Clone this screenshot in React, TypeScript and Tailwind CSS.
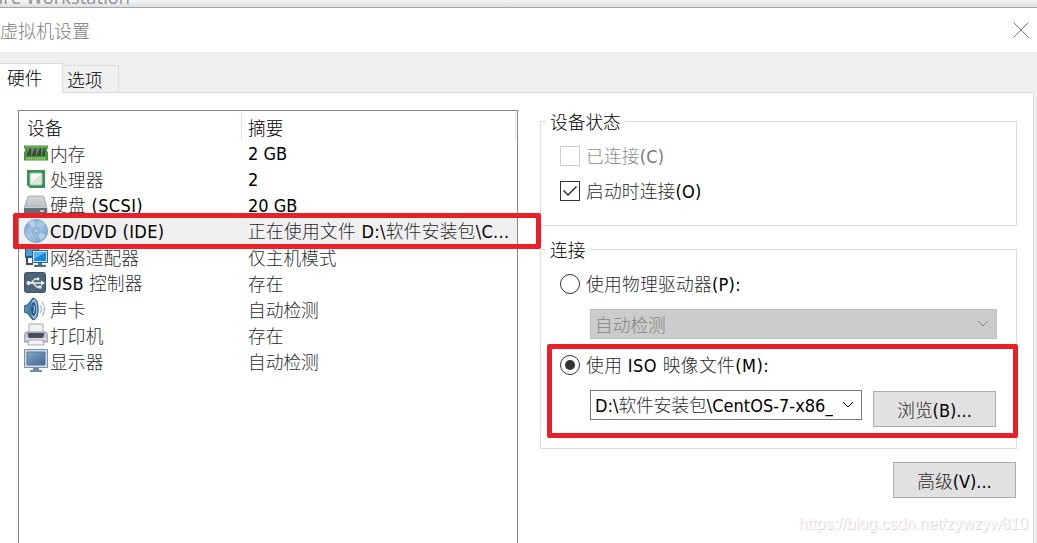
import type { ReactNode } from 'react';
import clsx from 'clsx';

// Latin runs use a wider, darker face than the Chinese ones
function Label({ text, className }: { text: string; className?: string }) {
  const parts = text.split(/([\x20-\x7e]+)/).filter(Boolean);

  return (
    <span className={clsx('whitespace-pre', className)}>
      {parts.map((part, i) =>
        /[\x20-\x7e]/.test(part) ? (
          <span
            key={i}
            className="font-['DejaVu_Sans_Condensed','DejaVu_Sans',sans-serif] text-[18px] font-normal [font-stretch:condensed]"
          >
            {part}
          </span>
        ) : (
          <span key={i} className="opacity-85">
            {part}
          </span>
        )
      )}
    </span>
  );
}

function MemoryIcon() {
  return (
    <svg viewBox="0 0 24 24" className="size-6">
      <path d="M0 4.500h24v3h-1v3h1v9H0v-9h1v-3H0z" fill="#45963b" />
      <path d="M1 5.500h22v1H1z" fill="#86bd6d" />
      <path d="M3 7h4v8H3zM8 7h4v8H8zM13 7h4v8h-4zM18 7h3v8h-3z" fill="#3a4b3a" />
      <path d="M3 7h3L3 13zM8 7h3l-3 6zM13 7h3l-3 6zM18 7h2l-2 6z" fill="#74816f" />
      <path d="M2 17.500h20" stroke="#b5cf77" strokeWidth="2" strokeDasharray="1.500 .7" />
    </svg>
  );
}

function CpuIcon() {
  return (
    <svg viewBox="0 0 24 24" className="size-6">
      <path d="M3 3h18v18H6l-3-3z" fill="#238442" />
      <path d="M4 4h16v16H6.500L4 17.500z" fill="none" stroke="#46a35f" />
      <rect x="6" y="6" width="12" height="12" rx="1" fill="#dfe3df" stroke="#b7d3b8" />
      <path d="M7 7h10L7 16z" fill="#f8f9f7" />
    </svg>
  );
}

function DiskIcon() {
  return (
    <svg viewBox="0 0 24 24" className="size-6">
      <defs>
        <linearGradient id="disk" x2="0" y2="1">
          <stop stopColor="#d7d9dc" />
          <stop offset="1" stopColor="#a6aab0" />
        </linearGradient>
      </defs>
      <path d="M4 4q1-1 3-1h10q2 0 3 1l3 11v6H0v-6z" fill="url(#disk)" stroke="#898f98" strokeWidth=".7" />
      <path d="M0 14h23v7H0z" fill="#646b75" />
      <path d="M0 14.500h23" stroke="#c5c8cc" />
      <path d="M16 17h4v2h-4z" fill="#a8c8e0" />
    </svg>
  );
}

function DiscIcon() {
  return (
    <svg viewBox="0 0 24 24" className="size-6">
      <defs>
        <linearGradient id="disc" x2="1" y2="1">
          <stop stopColor="#6e9fcf" />
          <stop offset=".45" stopColor="#a9c9e5" />
          <stop offset="1" stopColor="#6797c6" />
        </linearGradient>
      </defs>
      <circle cx="12" cy="12" r="11.500" fill="url(#disc)" stroke="#7098bf" strokeWidth=".8" />
      <path d="M12 12L4 4q3-3 6-3.500zM12 12l10 4q-2 4-5 6z" fill="#d9edfa" opacity=".5" />
      <circle cx="12" cy="12" r="4" fill="#9cc0df" stroke="#86acd0" />
      <circle cx="12" cy="12" r="1.500" fill="#eff7fc" stroke="#7ea6ca" />
    </svg>
  );
}

function NetworkIcon() {
  return (
    <svg viewBox="0 0 24 24" className="size-6">
      <path d="M1 2h14v11H1z" fill="#2c5b82" />
      <path d="M2 4h12v7H2z" fill="#4c9bd1" />
      <path d="M3 13v6h6" fill="none" stroke="#314e66" strokeWidth="2" />
      <path d="M8.500 5.500h15v12h-15z" fill="#d1e0ec" stroke="#34668c" />
      <path d="M10 7h12v9H10z" fill="#198ae0" />
      <path d="M10 7h12l-12 7z" fill="#56b5f3" />
      <path d="M14 18h4v2h4v2H10v-2h4z" fill="#47708f" />
    </svg>
  );
}

function UsbIcon() {
  return (
    <svg viewBox="0 0 24 24" className="size-6">
      <rect x="0.500" y="1.500" width="21" height="20" rx="2" fill="#4c657a" stroke="#3c556b" />
      <g fill="none" stroke="#eef2f4" strokeWidth="1.300">
        <path d="M4 12h14M7 12l4-4h3M9 12l4 4h3" />
      </g>
      <circle cx="4.500" cy="12" r="2" fill="#eef2f4" />
      <circle cx="14" cy="8" r="1.400" fill="#eef2f4" />
      <path d="M14.500 14.500h3v3h-3zM17 9.500l4 2.500-4 2.500z" fill="#eef2f4" />
    </svg>
  );
}

function SoundIcon() {
  return (
    <svg viewBox="0 0 24 24" className="size-6">
      <path d="M0 9l3-1 6-7q5 1 5 11T9 23l-6-7-3-1z" fill="#538cb5" stroke="#345f82" />
      <ellipse cx="10" cy="12" rx="4" ry="10.500" fill="#95bcdc" stroke="#315d83" />
      <ellipse cx="9.500" cy="12" rx="2.500" ry="7" fill="#285b8b" />
      <path d="M9.500 8q2 4 0 8" stroke="#a5d6f5" fill="none" />
      <path d="M16 8q3 4 0 8M18 5q5 7 0 14" stroke="#9cb1c4" strokeWidth="1.200" fill="none" />
    </svg>
  );
}

function PrinterIcon() {
  return (
    <svg viewBox="0 0 24 24" className="size-6">
      <path d="M5 1h14v11H5z" fill="#eff1f5" stroke="#a4a8b2" />
      <path d="M2 9h20l2 3v7H0v-7z" fill="#c0c2ce" stroke="#858998" strokeWidth=".8" />
      <path d="M4 10h16v3q-1 2-3 2H7q-3 0-3-2z" fill="#4c4f5b" />
      <path d="M1 16h22" stroke="#e4e5ed" strokeWidth="1.500" />
      <path d="M5 17h14l1 5H4z" fill="#f2f3f6" stroke="#9699a5" strokeWidth=".8" />
    </svg>
  );
}

function DisplayIcon() {
  return (
    <svg viewBox="0 0 24 24" className="size-6">
      <defs>
        <linearGradient id="screen" x2="1" y2="1">
          <stop stopColor="#86a8c6" />
          <stop offset="1" stopColor="#3f6791" />
        </linearGradient>
      </defs>
      <path d="M.5.500h23v18H.5z" fill="#d2dce5" stroke="#7992a7" />
      <path d="M3 3h18v13H3z" fill="url(#screen)" stroke="#56799a" />
      <path d="M9 19h6v2h3v2H6v-2h3z" fill="#6e8baa" />
    </svg>
  );
}

const devices: { icon: ReactNode; name: string; summary: string; selected?: boolean }[] = [
  { icon: <MemoryIcon />, name: '内存', summary: '2 GB' },
  { icon: <CpuIcon />, name: '处理器', summary: '2' },
  { icon: <DiskIcon />, name: '硬盘 (SCSI)', summary: '20 GB' },
  { icon: <DiscIcon />, name: 'CD/DVD (IDE)', summary: '正在使用文件 D:\\软件安装包\\C...', selected: true },
  { icon: <NetworkIcon />, name: '网络适配器', summary: '仅主机模式' },
  { icon: <UsbIcon />, name: 'USB 控制器', summary: '存在' },
  { icon: <SoundIcon />, name: '声卡', summary: '自动检测' },
  { icon: <PrinterIcon />, name: '打印机', summary: '存在' },
  { icon: <DisplayIcon />, name: '显示器', summary: '自动检测' },
];

function DeviceList() {
  return (
    <div className="mt-[17px] ml-[18px] h-[440px] w-[500px] border border-[#828790] bg-white">
      <div className="flex h-[29px] pt-px">
        <div className="h-7 w-[223px] border-r border-[#e2e2e2] pl-2 leading-[30px]">设备</div>
        <div className="h-7 w-[274px] border-r border-[#e2e2e2] pl-1.5 leading-[30px]">摘要</div>
      </div>
      {devices.map((device) => (
        <div key={device.name} className={clsx('flex h-[26px] items-center', device.selected && 'bg-[#f0f0f0]')}>
          <div className="ml-[5px] w-[26px] shrink-0">{device.icon}</div>
          <Label
            text={device.name}
            className={clsx('w-[198px] shrink-0', /[(]/.test(device.name) ? 'tracking-[0.35px]' : 'tracking-[0.15px]')}
          />
          <Label text={device.summary} className={clsx(device.selected && 'tracking-[0.3px]')} />
        </div>
      ))}
    </div>
  );
}

function Group({ title, className, children }: { title: string; className: string; children: ReactNode }) {
  return (
    <section className={clsx('relative w-[477px] border border-[#dcdcdc]', className)}>
      <h2 className="absolute -top-[14px] left-[5px] bg-white px-1 leading-[26px]">{title}</h2>
      {children}
    </section>
  );
}

function Checkbox({ label, checked, disabled }: { label: string; checked?: boolean; disabled?: boolean }) {
  return (
    <div className={clsx('flex h-5 items-center gap-1.5', disabled && 'text-[#787878]')}>
      <span className={clsx('size-5 border', disabled ? 'border-[#cccccc]' : 'border-[#333333]')}>
        {checked && (
          <svg viewBox="0 0 18 18" className="size-[18px]" fill="none" stroke="#333" strokeWidth="1.500">
            <path d="M2.500 8.500l4.500 4.500 8.500-8.500" />
          </svg>
        )}
      </span>
      <Label text={label} className="tracking-[0.2px]" />
    </div>
  );
}

function Radio({ label, checked }: { label: string; checked?: boolean }) {
  return (
    <div className="flex h-5 items-center gap-1.5">
      <span className="flex size-5 items-center justify-center rounded-full border border-[#333333]">
        {checked && <span className="size-2.5 rounded-full bg-[#333333]" />}
      </span>
      <Label text={label} className={checked ? 'tracking-[0.45px]' : 'tracking-[0.3px]'} />
    </div>
  );
}

function Chevron() {
  return (
    <svg viewBox="0 0 12 8" className="h-2 w-3 shrink-0" fill="none" stroke="currentColor" strokeWidth="1">
      <path d="M1 1l5 5 5-5" />
    </svg>
  );
}

function Button({ text }: { text: string }) {
  return (
    <button className="h-9 w-[123px] shrink-0 border border-[#adadad] bg-[#e1e1e1] pt-px">
      <Label text={text} />
    </button>
  );
}

export default function App() {
  return (
    <div className="relative flex h-[543px] w-[1037px] flex-col overflow-hidden bg-[#f0f0f0] font-['Noto_Sans_CJK_SC',sans-serif] text-[17.7px] leading-[26px] font-light text-black">
      {/* Parent window edge */}
      <div className="h-2 shrink-0 overflow-hidden border-b border-[#a6a6a6] bg-linear-to-b from-[#f7f7f7] to-[#dedede]">
        <div className="-mt-[15px] -ml-[7px] font-['Open_Sans',sans-serif] text-[18.2px] leading-6 font-normal tracking-[0.1px] text-[#909090]">
          are Workstation
        </div>
      </div>
      <header className="flex h-11 shrink-0 items-center justify-between bg-white pr-2 pb-px text-[18px] font-light text-[#808080]">
        <span>虚拟机设置</span>
        <svg viewBox="0 0 16 16" className="size-4" fill="none" stroke="#777" strokeWidth="1">
          <path d="M.5.500l15 15M15.500.500l-15 15" />
        </svg>
      </header>

      <nav className="relative z-10 -mb-px flex h-[41px] shrink-0 items-end">
        <div className="h-[30px] w-[63px] border-t border-r border-[#dcdcdc] bg-white pl-[7px] leading-[27px]">硬件</div>
        <div className="h-7 w-14 border border-l-0 border-[#dcdcdc] pl-1 leading-[26px]">选项</div>
      </nav>

      <main className="flex h-[451px] w-[1034px] shrink-0 border-t border-r border-[#dcdcdc] bg-white">
        <DeviceList />
        <div className="ml-[22px]">
          <Group title="设备状态" className="mt-7 h-[105px] pt-6 pl-[19px]">
            <Checkbox label="已连接(C)" disabled />
            <div className="h-[15px]" />
            <Checkbox label="启动时连接(O)" checked />
          </Group>
          <Group title="连接" className="mt-[23px] h-[200px] pt-6 pl-[19px]">
            <Radio label="使用物理驱动器(P):" />
            <div className="mt-[15px] ml-[30px] flex h-[30px] w-[407px] items-center justify-between border border-[#bfbfbf] bg-[#cccccc] pr-[7px] pl-1 text-[#838383]">
              <span>自动检测</span>
              <Chevron />
            </div>
            <div className="h-4" />
            <Radio label="使用 ISO 映像文件(M):" checked />
            <div className="mt-[15px] ml-[30px] flex items-start gap-[11px]">
              <div className="flex h-[30px] w-[272px] items-center justify-between border border-[#7a7a7a] pr-[7px] pb-px pl-1">
                <Label text="D:\软件安装包\CentOS-7-x86_" className="w-[238px] overflow-hidden" />
                <Chevron />
              </div>
              <div className="pt-px">
                <Button text="浏览(B)..." />
              </div>
            </div>
          </Group>
          <div className="mt-[13px] flex w-[476px] justify-end">
            <Button text="高级(V)..." />
          </div>
        </div>
      </main>

      {/* Highlight frames */}
      <div className="absolute top-[213px] left-[13px] z-20 h-[36px] w-[528px] rounded-[2px] border-[5px] border-[#e92027]" />
      <div className="absolute top-[344px] left-[547px] z-20 h-[94px] w-[471px] rounded-[2px] border-[5px] border-[#e92027]" />

      <div className="absolute right-[9px] bottom-1.5 z-20 font-['Liberation_Sans',sans-serif] text-[16px] font-normal text-[#fcfcfc] [text-shadow:1px_1px_1px_#d2d2d2]">
        https://blog.csdn.net/zywzyw810
      </div>
    </div>
  );
}
